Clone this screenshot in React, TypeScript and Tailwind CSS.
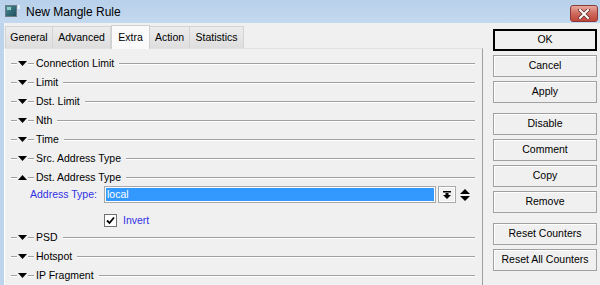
import React from "react";

const font = { fontFamily: '"Liberation Sans", Arial, sans-serif' };

function Etch({ className = "" }: { className?: string }) {
  return <div className={`h-px bg-[#a0a0a0] shadow-[0_1px_0_#ffffff] ${className}`} />;
}

function Tri({ up }: { up?: boolean }) {
  return (
    <svg width="9" height="5" viewBox="0 0 9 5" className="ml-[1px] shrink-0">
      {up ? <polygon points="0,5 9,5 4.5,0" fill="#000" /> : <polygon points="0,0 9,0 4.5,5" fill="#000" />}
    </svg>
  );
}

function Section({ label, open }: { label: string; open?: boolean }) {
  return (
    <div className="flex h-[19px] items-center pl-[6px] pr-[7px]">
      <Etch className="w-[6px] shrink-0" />
      <Tri up={open} />
      <Etch className="ml-[1px] w-[6px] shrink-0" />
      <span className="ml-[2px] whitespace-nowrap text-black">{label}</span>
      <Etch className="ml-[5px] flex-1" />
    </div>
  );
}

function Btn({ label, main, className = "" }: { label: string; main?: boolean; className?: string }) {
  return (
    <div
      className={`flex h-[22px] items-center justify-center bg-[#f0f0f0] text-black ${
        main ? "border-2 border-black" : "border border-[#a0a0a0] shadow-[inset_1px_1px_0_#ffffff]"
      } ${className}`}
    >
      {label}
    </div>
  );
}

const tabs = [
  { name: "General", w: "w-[48px]" },
  { name: "Advanced", w: "w-[59px]" },
  { name: "Extra", w: "w-[39px]", active: true },
  { name: "Action", w: "w-[41px]" },
  { name: "Statistics", w: "w-[55px]" },
];

export default function App() {
  return (
    <div style={font} className="flex h-[285px] w-[600px] flex-col overflow-hidden bg-[#bdd4ed] text-[10.5px]">
      {/* title bar */}
      <div className="flex h-[23px] shrink-0 bg-gradient-to-b from-[#b8d0ea] to-[#c4d9ef]">
        <div className="flex items-center pl-[5px]">
          <svg width="16" height="15" viewBox="0 0 16 15">
            <defs>
              <linearGradient id="ic" x1="0" y1="0" x2="1" y2="1">
                <stop offset="0" stopColor="#4d8c9a" />
                <stop offset="1" stopColor="#1c4d5a" />
              </linearGradient>
            </defs>
            <rect x="0.5" y="1.5" width="11" height="11" fill="url(#ic)" stroke="#6b7d86" />
            <rect x="2" y="3" width="4" height="3" fill="#8fd0c8" />
            <rect x="13" y="1" width="1.5" height="4" fill="#ffffff" />
          </svg>
          <span className="ml-[5px] text-[12px] text-black">New Mangle Rule</span>
        </div>
        <div className="ml-auto mr-[2px] mt-[5px] flex h-[17px] w-[28px] items-center justify-center rounded-[3px] border border-[#8a3a34] bg-gradient-to-b from-[#e8a89f] via-[#cf6a5e] to-[#c0453a]">
          <svg width="12" height="10" viewBox="0 0 12 10">
            <path d="M2 1 L10 9 M10 1 L2 9" stroke="#5a2a26" strokeWidth="3.4" strokeLinecap="square" />
            <path d="M2 1 L10 9 M10 1 L2 9" stroke="#ffffff" strokeWidth="2" strokeLinecap="square" />
          </svg>
        </div>
      </div>

      {/* body */}
      <div className="flex flex-1 pl-[4px]">
        <div className="flex flex-1 bg-[#f0f0f0]">
          {/* left: tabs + panel */}
          <div className="flex w-[479px] flex-col">
            <div className="flex h-[25px] items-end pl-[1px]">
              {tabs.map((t) =>
                t.active ? (
                  <div
                    key={t.name}
                    className={`relative z-10 -mb-px flex h-[24px] items-center justify-center border border-b-0 border-[#d0d0d0] bg-[#fafafa] pt-px text-black ${t.w}`}
                  >
                    {t.name}
                  </div>
                ) : (
                  <div
                    key={t.name}
                    className={`-ml-px flex h-[22px] items-center justify-center border border-b-0 border-[#d4d4d4] bg-gradient-to-b from-[#ececec] to-[#dedede] pt-px text-black first:ml-0 ${t.w}`}
                  >
                    {t.name}
                  </div>
                )
              )}
            </div>
            <div className="flex-1 border border-l-[#ffffff] border-t-[#e2e2e2] border-r-[#a0a0a0] border-b-[#a0a0a0] pt-[5px]">
              <Section label="Connection Limit" />
              <Section label="Limit" />
              <Section label="Dst. Limit" />
              <Section label="Nth" />
              <Section label="Time" />
              <Section label="Src. Address Type" />
              <Section label="Dst. Address Type" open />

              <div className="-mt-px flex h-[17px] items-center pl-[25px]">
                <span className="w-[74px] shrink-0 pt-px text-[#3030e6]">Address Type:</span>
                <div className="flex h-[17px] w-[332px] items-center border border-[#a9a9a9] bg-[#3399ff] pl-[2px] pt-px text-white shadow-[inset_0_0_0_1px_#ffffff]">
                  local
                </div>
                <div className="ml-[2px] flex h-[17px] w-[18px] items-center justify-center border border-[#a9a9a9] bg-[#f0f0f0] shadow-[inset_0_0_0_1px_#ffffff]">
                  <svg width="8" height="8" viewBox="0 0 8 8">
                    <rect x="0" y="0" width="8" height="1.5" fill="#000" />
                    <rect x="2.5" y="2" width="3" height="2" fill="#000" />
                    <polygon points="0,4 8,4 4,8" fill="#000" />
                  </svg>
                </div>
                <svg width="10" height="12" viewBox="0 0 10 12" className="ml-[4px]">
                  <polygon points="0,5 10,5 5,0" fill="#000" />
                  <polygon points="0,7 10,7 5,12" fill="#000" />
                </svg>
              </div>

              <div className="flex h-[25px] items-start pl-[99px] pt-[10px]">
                <div className="flex items-center">
                  <div className="flex h-[13px] w-[13px] items-center justify-center border border-[#707070] bg-white">
                    <svg width="9" height="9" viewBox="0 0 9 9">
                      <path d="M1 4.5 L3.5 7 L8 1.5" fill="none" stroke="#000" strokeWidth="1.8" />
                    </svg>
                  </div>
                  <span className="ml-[6px] text-[#3030e6]">Invert</span>
                </div>
              </div>

              <Section label="PSD" />
              <Section label="Hotspot" />
              <Section label="IP Fragment" />
            </div>
          </div>

          {/* right: buttons */}
          <div className="ml-[10px] flex w-[104px] flex-col gap-[4px] pt-[6px]">
            <Btn label="OK" main />
            <Btn label="Cancel" />
            <Btn label="Apply" />
            <Btn label="Disable" className="mt-[6px]" />
            <Btn label="Comment" />
            <Btn label="Copy" />
            <Btn label="Remove" />
            <Btn label="Reset Counters" className="mt-[6px]" />
            <Btn label="Reset All Counters" />
          </div>
        </div>
      </div>
    </div>
  );
}
